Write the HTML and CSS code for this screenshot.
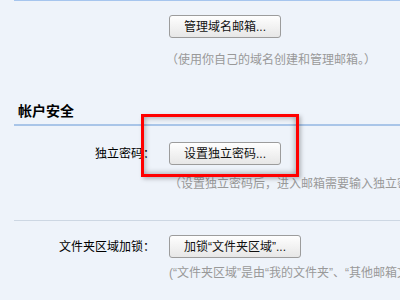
FILE: index.html
```html
<!DOCTYPE html>
<html lang="zh-CN">
<head>
    <meta charset="UTF-8">
    <title>帐户设置</title>
    <link rel="stylesheet" href="styles.css">
</head>
<body>
    <div class="pageCls">
        <div class="sectionCls domainCls">
            <div class="rowCls">
                <span class="labelCls"></span>
                <button class="btnCls">管理域名邮箱...</button>
            </div>
            <p class="hintCls hintOneCls">（使用你自己的域名创建和管理邮箱。）</p>
        </div>
        <h3 class="titleCls">帐户安全</h3>
        <div class="sectionCls">
            <div class="rowCls rowPwdCls">
                <span class="labelCls">独立密码：</span>
                <button class="btnCls">设置独立密码...</button>
            </div>
            <p class="hintCls hintTwoCls">（设置独立密码后，进入邮箱需要输入独立密码才能查看邮件）</p>
        </div>
        <div class="sectionCls lockCls">
            <div class="rowCls">
                <span class="labelCls">文件夹区域加锁：</span>
                <button class="btnCls">加锁“文件夹区域”...</button>
            </div>
            <p class="hintCls hintThreeCls">(“文件夹区域”是由“我的文件夹”、“其他邮箱文件夹”组成)</p>
        </div>
        <div class="markCls"></div>
    </div>
</body>
</html>
```
FILE: styles.css
```css
*{margin:0;padding:0;box-sizing:border-box;}
body{width:400px;height:300px;overflow:hidden;background-color:#eef3fa;font-family:"Liberation Sans","Noto Sans CJK SC",sans-serif;font-size:12px;color:#000;}
.pageCls{position:relative;margin-left:14px;height:100%;}
.domainCls{border-top:1px solid #a6c5ee;padding-top:14px;}
.rowCls{display:flex;align-items:center;gap:14px;white-space:nowrap;}
.labelCls{width:141px;text-align:right;line-height:18px;}
.btnCls{height:23px;padding:0 14px;font-family:inherit;font-size:12px;color:#111;background:linear-gradient(#fefefe,#e7e7e7);border:1px solid #9c9c9c;border-radius:3px;line-height:20px;}
.hintCls{margin-left:152px;color:#999;line-height:18px;white-space:nowrap;}
.hintOneCls{margin-top:13px;}
.titleCls{margin-top:32px;padding-bottom:3px;font-size:14px;line-height:20px;font-weight:bold;padding-left:4px;border-bottom:2px solid #a9c5e8;}
.rowPwdCls{margin-top:16px;}
.hintTwoCls{margin-top:10px;padding-left:3px;}
.lockCls{margin-top:27px;border-top:1px solid #cdd7e3;padding-top:14px;}
.hintThreeCls{margin-top:6px;padding-left:3px;}
.markCls{position:absolute;left:127px;top:114px;width:158px;height:63px;border:3px solid #f00;box-shadow:inset 0 0 6px rgba(0,0,0,.4),2px 2px 4px rgba(0,0,0,.25);}
```
